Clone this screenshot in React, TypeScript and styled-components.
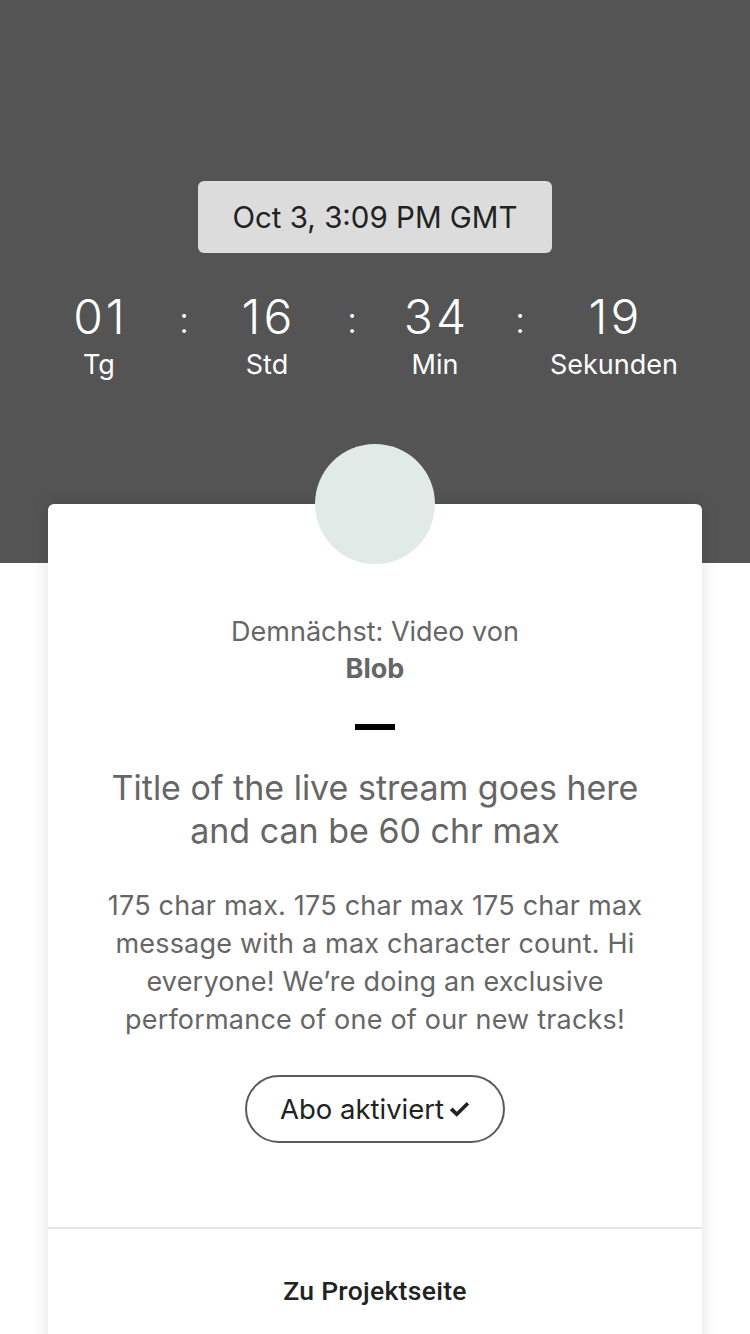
import React from "react";
import styled, { createGlobalStyle } from "styled-components";

const GlobalStyle = createGlobalStyle`
  html, body {
    margin: 0;
    padding: 0;
    background: #ffffff;
  }
  body {
    font-family: "Inter", "Roboto", "Noto Sans", sans-serif;
    -webkit-font-smoothing: antialiased;
  }
`;

interface TimeUnit {
  value: string;
  label: string;
  wide?: boolean;
}

const units: TimeUnit[] = [
  { value: "01", label: "Tg" },
  { value: "16", label: "Std" },
  { value: "34", label: "Min" },
  { value: "19", label: "Sekunden", wide: true },
];

const CheckIcon = () => (
  <svg width="21" height="17" viewBox="0 0 20 16" aria-hidden>
    <path d="M0.8 8.6 L3.4 6.2 L7.4 10.2 L16.8 0.8 L19.2 3.2 L7.4 15 Z" fill="#222" />
  </svg>
);

export default function App() {
  return (
    <Page>
      <GlobalStyle />
      <Hero>
        <DatePill>Oct 3, 3:09 PM GMT</DatePill>
        <Countdown>
          {units.map((u, i) => (
            <React.Fragment key={u.label}>
              {i > 0 && <Colon>:</Colon>}
              <Unit $wide={u.wide}>
                <Digits>{u.value}</Digits>
                <UnitLabel>{u.label}</UnitLabel>
              </Unit>
            </React.Fragment>
          ))}
        </Countdown>
      </Hero>
      <CardArea>
        <Card>
          <Avatar />
          <CardBody>
            <Intro>Demnächst: Video von</Intro>
            <Artist>Blob</Artist>
            <Dash />
            <Title>
              Title of the live stream goes here
              <br />
              and can be 60 chr max
            </Title>
            <Message>
              175 char max. 175 char max 175 char max message with a max
              character count. Hi everyone! We’re doing an exclusive
              performance of one of our new tracks!
            </Message>
            <SubscribeButton>
              Abo aktiviert
              <CheckIcon />
            </SubscribeButton>
          </CardBody>
          <CardFooter>Zu Projektseite</CardFooter>
        </Card>
      </CardArea>
    </Page>
  );
}

const Page = styled.div`
  width: 750px;
  height: 1334px;
  overflow: hidden;
  position: relative;
  background: #ffffff;
`;

const Hero = styled.div`
  background: #545454;
  height: 563px;
  display: flex;
  flex-direction: column;
  align-items: center;
  padding-top: 181px;
  box-sizing: border-box;
`;

const DatePill = styled.div`
  width: 354px;
  height: 72px;
  border-radius: 6px;
  background: #dcdcdc;
  color: #222222;
  font-size: 29.5px;
  display: flex;
  align-items: center;
  justify-content: center;
`;

const Countdown = styled.div`
  align-self: stretch;
  display: flex;
  align-items: flex-start;
  padding-left: 46px;
  margin-top: 39px;
  gap: 27px;
`;

const Unit = styled.div<{ $wide?: boolean }>`
  width: ${(p) => (p.$wide ? "128px" : "106px")};
  display: flex;
  flex-direction: column;
  align-items: center;
  color: #ffffff;
`;

const Digits = styled.div`
  font-size: 48px;
  font-weight: 300;
  line-height: 50px;
  letter-spacing: 3px;
  padding-left: 3px;
`;

const UnitLabel = styled.div`
  font-size: 27px;
  line-height: 32px;
  margin-top: 7px;
`;

const Colon = styled.div`
  width: 8px;
  color: #ffffff;
  font-size: 36px;
  font-weight: 300;
  line-height: 50px;
  text-align: center;
  margin-top: 3px;
`;

const CardArea = styled.div`
  position: absolute;
  left: 48px;
  right: 48px;
  top: 504px;
`;

const Card = styled.div`
  position: relative;
  background: #ffffff;
  border-radius: 6px 6px 0 0;
  box-shadow: 0 0 18px rgba(0, 0, 0, 0.12);
  display: flex;
  flex-direction: column;
  height: 860px;
`;

const Avatar = styled.div`
  position: absolute;
  top: -60px;
  left: 50%;
  margin-left: -60px;
  width: 120px;
  height: 120px;
  border-radius: 50%;
  background: #e0ebe7;
`;

const CardBody = styled.div`
  display: flex;
  flex-direction: column;
  align-items: center;
  padding: 110px 30px 0;
  height: 725px;
  box-sizing: border-box;
  border-bottom: 2px solid #e6e6e6;
  color: #666666;
  text-align: center;
`;

const Intro = styled.div`
  font-size: 27px;
  line-height: 36px;
`;

const Artist = styled.div`
  font-size: 27px;
  font-weight: 700;
  line-height: 38px;
`;

const Dash = styled.div`
  width: 40px;
  height: 6px;
  background: #000000;
  margin-top: 36px;
`;

const Title = styled.div`
  margin-top: 36px;
  font-size: 34px;
  line-height: 43px;
`;

const Message = styled.div`
  margin-top: 35px;
  font-size: 27px;
  line-height: 38px;
  letter-spacing: 0.2px;
  max-width: 570px;
`;

const SubscribeButton = styled.button`
  margin-top: 36px;
  width: 260px;
  height: 68px;
  border: 2px solid #5a5a5a;
  border-radius: 34px;
  background: #ffffff;
  color: #222222;
  font-family: inherit;
  font-size: 27.5px;
  display: flex;
  align-items: center;
  justify-content: center;
  gap: 5px;
  padding: 0;
`;

const CardFooter = styled.div`
  display: flex;
  justify-content: center;
  padding-top: 46px;
  font-family: "Roboto", "Noto Sans", sans-serif;
  font-size: 26.5px;
  font-weight: 500;
  color: #222222;
  letter-spacing: 0.3px;
`;
